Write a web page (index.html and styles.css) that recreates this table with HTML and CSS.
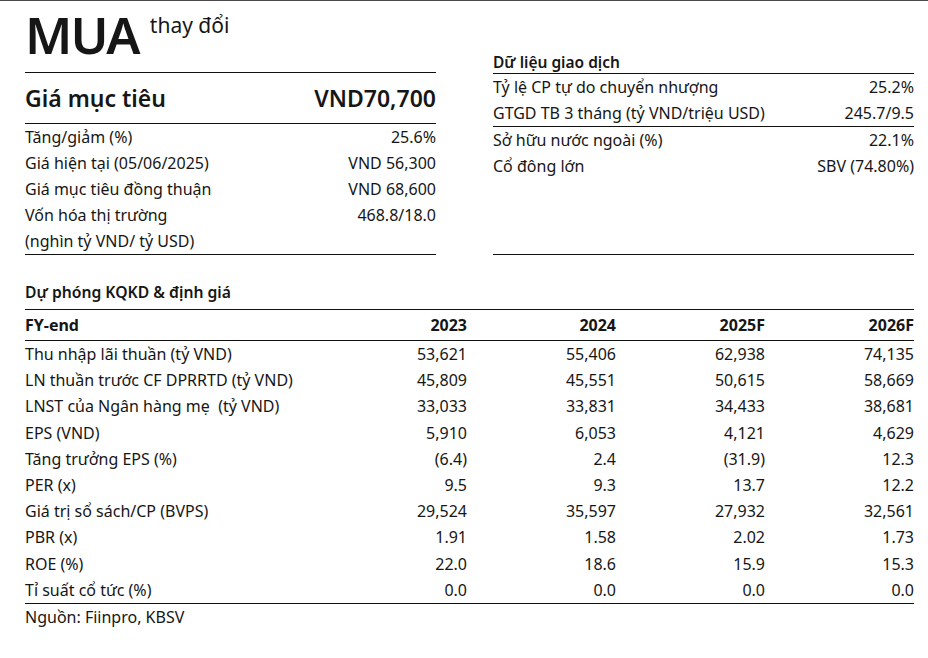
FILE: index.html
```html
<!DOCTYPE html>
<html lang="vi">
<head>
<meta charset="utf-8">
<link rel="stylesheet" href="styles.css">
</head>
<body>
<div class="page">
  <div class="top">
    <div class="col-left">
      <div class="rating"><span class="rating-main">MUA</span><span class="rating-sub">thay đổi</span></div>
      <div class="target"><span>Giá mục tiêu</span><span>VND70,700</span></div>
      <div class="kv-group">
        <div class="kv"><span>Tăng/giảm (%)</span><span>25.6%</span></div>
        <div class="kv"><span>Giá hiện tại (05/06/2025)</span><span>VND 56,300</span></div>
        <div class="kv"><span>Giá mục tiêu đồng thuận</span><span>VND 68,600</span></div>
        <div class="kv"><span>Vốn hóa thị trường</span><span>468.8/18.0</span></div>
        <div class="kv"><span>(nghìn tỷ VND/ tỷ USD)</span><span></span></div>
      </div>
    </div>
    <div class="col-right">
      <div class="section-title">Dữ liệu giao dịch</div>
      <div class="kv-sub">
        <div class="kv"><span>Tỷ lệ CP tự do chuyển nhượng</span><span>25.2%</span></div>
        <div class="kv"><span>GTGD TB 3 tháng (tỷ VND/triệu USD)</span><span>245.7/9.5</span></div>
      </div>
      <div class="kv-group grow">
        <div class="kv"><span>Sở hữu nước ngoài (%)</span><span>22.1%</span></div>
        <div class="kv"><span>Cổ đông lớn</span><span>SBV (74.80%)</span></div>
      </div>
    </div>
  </div>

  <div class="forecast-title">Dự phóng KQKD &amp; định giá</div>
  <table class="fc">
    <thead>
      <tr><th>FY-end</th><th>2023</th><th>2024</th><th>2025F</th><th>2026F</th></tr>
    </thead>
    <tbody>
      <tr><td>Thu nhập lãi thuần (tỷ VND)</td><td>53,621</td><td>55,406</td><td>62,938</td><td>74,135</td></tr>
      <tr><td>LN thuần trước CF DPRRTD (tỷ VND)</td><td>45,809</td><td>45,551</td><td>50,615</td><td>58,669</td></tr>
      <tr><td>LNST của Ngân hàng mẹ&nbsp; (tỷ VND)</td><td>33,033</td><td>33,831</td><td>34,433</td><td>38,681</td></tr>
      <tr><td>EPS (VND)</td><td>5,910</td><td>6,053</td><td>4,121</td><td>4,629</td></tr>
      <tr><td>Tăng trưởng EPS (%)</td><td>(6.4)</td><td>2.4</td><td>(31.9)</td><td>12.3</td></tr>
      <tr><td>PER (x)</td><td>9.5</td><td>9.3</td><td>13.7</td><td>12.2</td></tr>
      <tr><td>Giá trị sổ sách/CP (BVPS)</td><td>29,524</td><td>35,597</td><td>27,932</td><td>32,561</td></tr>
      <tr><td>PBR (x)</td><td>1.91</td><td>1.58</td><td>2.02</td><td>1.73</td></tr>
      <tr><td>ROE (%)</td><td>22.0</td><td>18.6</td><td>15.9</td><td>15.3</td></tr>
      <tr><td>Tỉ suất cổ tức (%)</td><td>0.0</td><td>0.0</td><td>0.0</td><td>0.0</td></tr>
    </tbody>
  </table>
  <div class="source">Nguồn: Fiinpro, KBSV</div>
</div>
</body>
</html>
```

FILE: styles.css
```css
html, body {
  margin: 0;
  padding: 0;
  background: #ffffff;
}
body {
  font-family: "Noto Sans", "DejaVu Sans", sans-serif;
  font-size: 16px;
  color: #161616;
}
.page {
  border-top: 1px solid #4a4a4a;
  padding: 0 14px 0 25px;
}
.top {
  display: flex;
  gap: 57px;
  align-items: stretch;
}
.col-left {
  width: 411px;
  display: flex;
  flex-direction: column;
}
.col-right {
  flex: 1;
  display: flex;
  flex-direction: column;
  padding-top: 50px;
}
.rating {
  height: 71px;
  display: flex;
  align-items: flex-start;
  gap: 11px;
  border-bottom: 1px solid #111;
}
.rating-main {
  font-size: 51px;
  font-weight: 600;
  line-height: 67px;
  letter-spacing: -1.8px;
}
.rating-sub {
  font-size: 21px;
  line-height: 26px;
  margin-top: 11px;
}
.target {
  height: 50px;
  display: flex;
  justify-content: space-between;
  align-items: center;
  font-size: 23px;
  font-weight: 600;
  border-bottom: 1px solid #111;
}
.kv-group {
  border-bottom: 1px solid #111;
}
.kv-group.grow {
  flex: 1;
}
.kv-sub {
  border-bottom: 1px solid #111;
}
.kv {
  display: flex;
  justify-content: space-between;
  line-height: 26px;
  height: 26px;
}
.section-title {
  font-weight: 600;
  font-size: 15.5px;
  line-height: 22px;
  border-bottom: 1px solid #111;
}
.forecast-title {
  font-weight: 600;
  font-size: 15.7px;
  margin-top: 26px;
  line-height: 22px;
  padding-bottom: 6px;
  border-bottom: 1px solid #111;
}
.fc {
  width: 100%;
  border-collapse: collapse;
}
.fc th, .fc td {
  padding: 0;
  text-align: right;
  width: 149px;
  white-space: nowrap;
}
.fc th:first-child, .fc td:first-child {
  text-align: left;
  width: auto;
}
.fc th {
  font-weight: 700;
  line-height: 30px;
  border-bottom: 1px solid #111;
}
.fc td {
  line-height: 26.2px;
}
.fc tbody tr:last-child td {
  border-bottom: 1px solid #111;
}
.source {
  line-height: 26px;
}
```
